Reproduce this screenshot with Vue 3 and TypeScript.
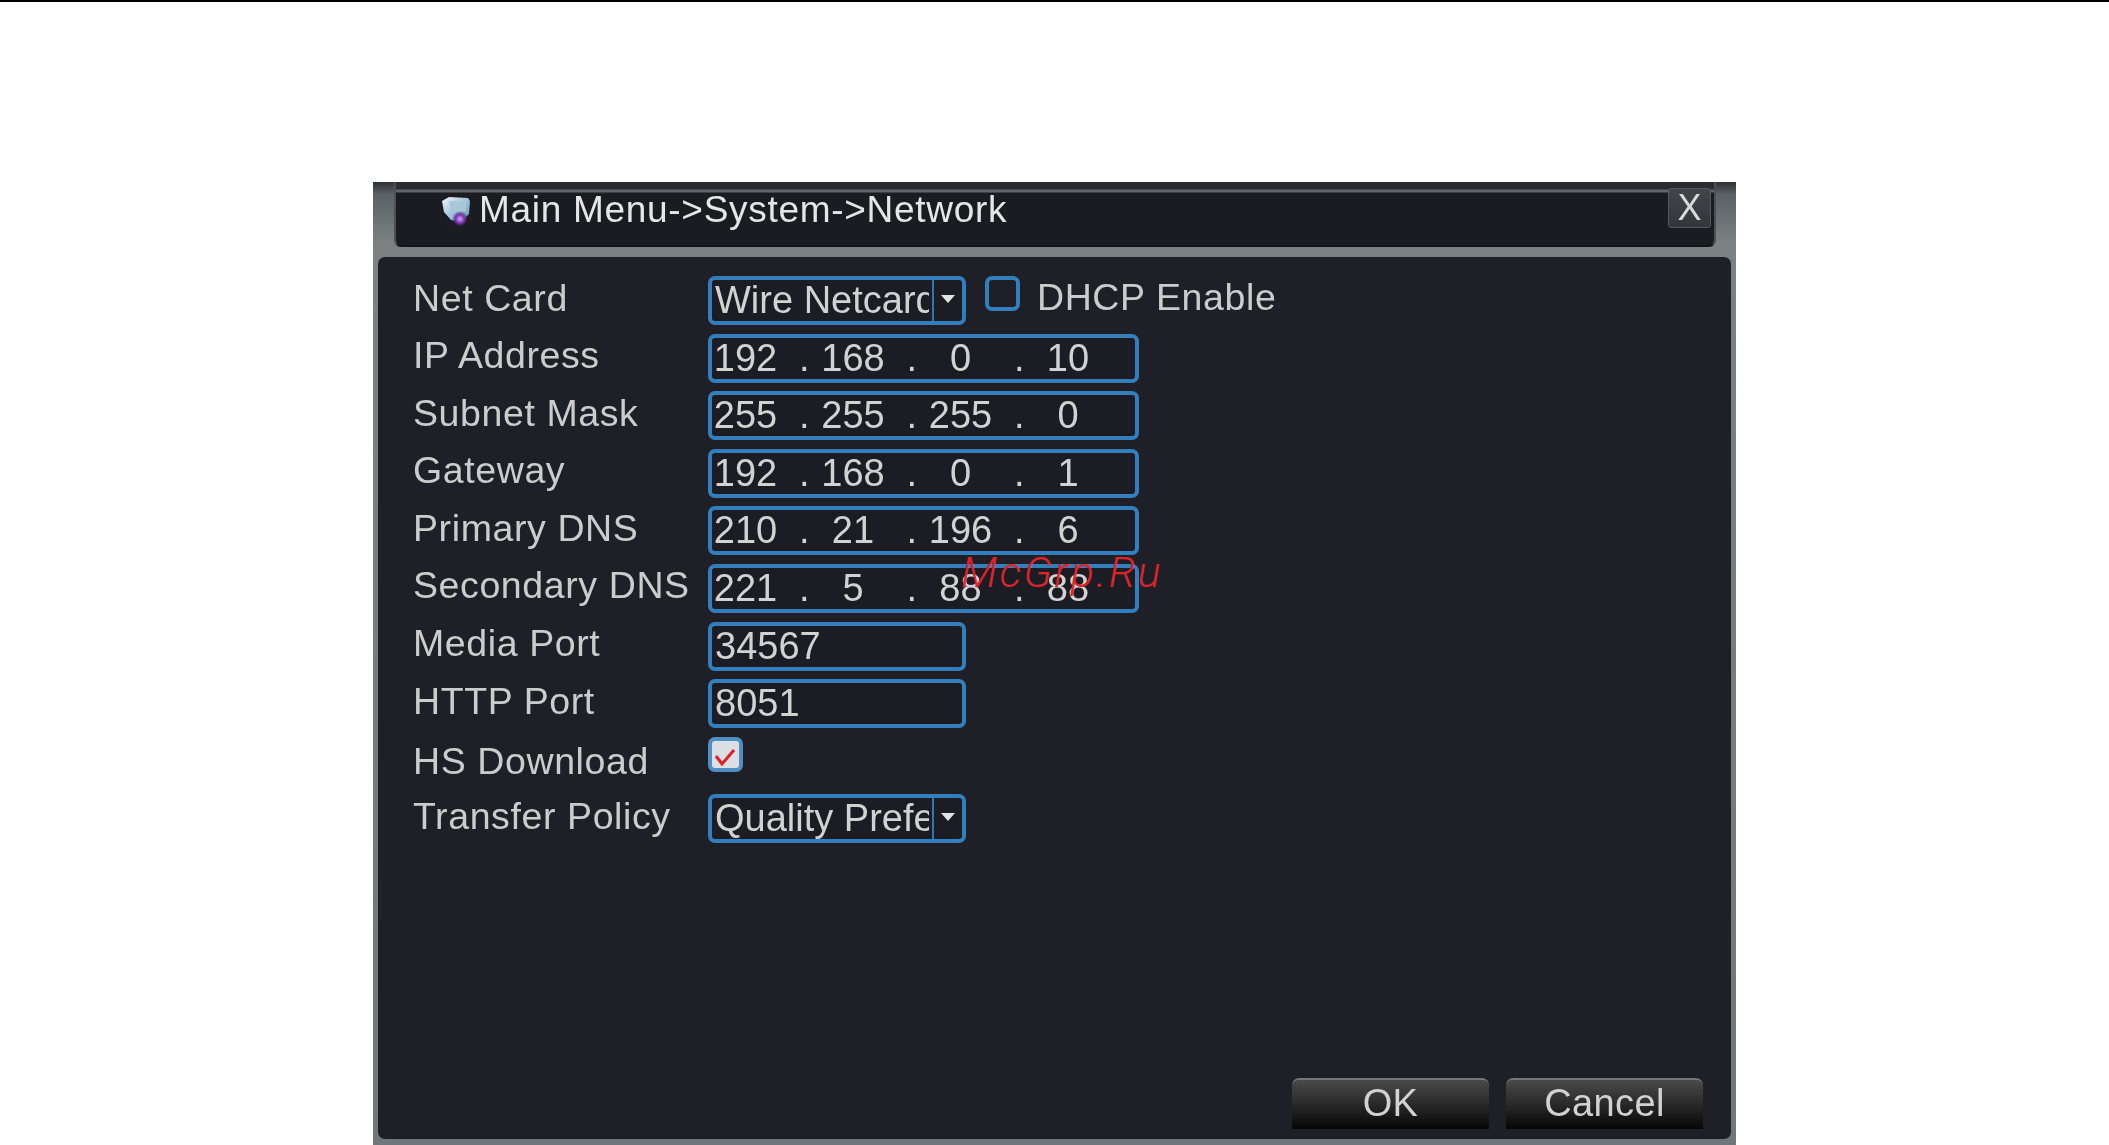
<script setup lang="ts">
const ipRows: { label: string; octets: string[] }[] = [
  { label: 'IP Address', octets: ['192', '168', '0', '10'] },
  { label: 'Subnet Mask', octets: ['255', '255', '255', '0'] },
  { label: 'Gateway', octets: ['192', '168', '0', '1'] },
  { label: 'Primary DNS', octets: ['210', '21', '196', '6'] },
  { label: 'Secondary DNS', octets: ['221', '5', '88', '88'] }
]
const portRows = [
  { label: 'Media Port', value: '34567' },
  { label: 'HTTP Port', value: '8051' }
]
</script>

<template>
  <div class="page">
    <div class="rule"></div>
    <div class="stage">
      <div class="dialog">
        <header class="titlebar">
          <svg class="app-icon" viewBox="0 0 30 32" width="30" height="32">
            <defs>
              <linearGradient id="screen" x1="0" y1="0" x2="1" y2="1">
                <stop offset="0" stop-color="#f2f6fa" />
                <stop offset="0.55" stop-color="#9cc0d8" />
                <stop offset="1" stop-color="#6a93b0" />
              </linearGradient>
              <radialGradient id="glow">
                <stop offset="0" stop-color="#d9a6f4" />
                <stop offset="0.55" stop-color="#7a30b0" />
                <stop offset="1" stop-color="#35205a" stop-opacity="0" />
              </radialGradient>
            </defs>
            <path d="M1 6 L8 2 L27 3 L29 6 L28 19 L20 27 L10 25 L3 17 Z" fill="url(#screen)" />
            <path d="M8 6 L25 7 L25 16 L10 17 Z" fill="#a9c6da" />
            <circle cx="19" cy="24" r="8" fill="url(#glow)" />
          </svg>
          <span class="title-text">Main Menu-&gt;System-&gt;Network</span>
          <button class="close">X</button>
        </header>

        <main class="panel">
          <div class="form">
            <div class="row">
              <span class="label">Net Card</span>
              <div class="field-group">
                <div class="box short select">
                  <span class="select-text">Wire Netcard</span>
                  <span class="caret"></span>
                </div>
                <span class="check"></span>
                <span class="label dhcp">DHCP Enable</span>
              </div>
            </div>

            <div v-for="r in ipRows" :key="r.label" class="row">
              <span class="label">{{ r.label }}</span>
              <div class="box wide">
                <template v-for="(o, i) in r.octets" :key="i">
                  <span class="octet">{{ o }}</span>
                  <span v-if="i < 3" class="dot">.</span>
                </template>
              </div>
            </div>

            <div v-for="r in portRows" :key="r.label" class="row">
              <span class="label">{{ r.label }}</span>
              <div class="box short"><span class="plain">{{ r.value }}</span></div>
            </div>

            <div class="row row-check">
              <span class="label flat">HS Download</span>
              <span class="check checked">
                <svg viewBox="0 0 24 24" width="24" height="24">
                  <path d="M2 14 L8 22 L20 8" fill="none" stroke="#e0202c" stroke-width="3" />
                </svg>
              </span>
            </div>

            <div class="row">
              <span class="label">Transfer Policy</span>
              <div class="box short select">
                <span class="select-text">Quality Prefer</span>
                <span class="caret"></span>
              </div>
            </div>
          </div>

          <footer class="actions">
            <button class="btn">OK</button>
            <button class="btn">Cancel</button>
          </footer>
        </main>
      </div>
      <span class="watermark">McGrp.Ru</span>
    </div>
  </div>
</template>

<style>
html, body { margin: 0; background: #fff; }
</style>

<style scoped>
.page {
  height: 1145px;
  overflow: hidden;
  display: flex;
  flex-direction: column;
  background: #fff;
  font-family: "Liberation Sans", Arial, sans-serif;
  color: #d6d6d6;
}
.rule { height: 2px; background: #000; flex: none; }
.stage {
  position: relative;
  flex: 1;
  min-height: 0;
  padding: 180px 373px 0 373px;
  display: flex;
}
.dialog {
  flex: 1;
  display: flex;
  flex-direction: column;
  padding: 0 5px 6px;
  background: linear-gradient(#2e3136 0, #5a6165 12px, #7b8281 62px, #70777a 100%);
  filter: blur(0.7px);
}
.titlebar {
  flex: none;
  height: 57px;
  margin: 0 15px 0 16px;
  padding: 6px 3px 0 45px;
  display: flex;
  align-items: flex-start;
  background: linear-gradient(#2a2c31 0, #2a2c31 7px, #62666b 8px, #62666b 10px, #1b1c22 11px);
  border-left: 2px solid #4c5054;
  border-right: 2px solid #4c5054;
  border-bottom: 2px solid #14151a;
  border-radius: 0 0 7px 7px;
}
.app-icon { flex: none; margin-top: 7px; }
.title-text {
  margin-left: 8px;
  margin-top: 1px;
  font-size: 37px;
  line-height: 42px;
  letter-spacing: 0.7px;
  white-space: nowrap;
  color: #e6e6e6;
}
.close {
  margin-left: auto;
  width: 43px;
  height: 40px;
  padding: 0;
  border: 1px solid #55585c;
  border-radius: 3px;
  background: linear-gradient(#43454a, #34353a);
  color: #d8d8d8;
  font: 36px/36px "Liberation Sans", Arial, sans-serif;
}
.panel {
  flex: 1;
  min-height: 0;
  margin-top: 10px;
  padding: 19px 28px 10px 35px;
  display: flex;
  flex-direction: column;
  background: #1f2027;
  border-radius: 7px;
}
.form { display: flex; flex-direction: column; gap: 8.6px; }
.row {
  height: 49px;
  display: grid;
  grid-template-columns: 295px 1fr;
  align-items: center;
}
.row-check { align-items: start; }
.label {
  font-size: 37.5px;
  line-height: 42px;
  letter-spacing: 0.6px;
  white-space: nowrap;
  padding-bottom: 6px;
  color: #cccccc;
}
.label.flat { padding: 3px 0 0; }
.label.dhcp { margin-left: 17px; }
.field-group { display: flex; align-items: flex-start; }
.box {
  box-sizing: border-box;
  height: 49px;
  display: flex;
  align-items: center;
  border: 4px solid #337fbd;
  border-radius: 7px;
  font-size: 38px;
  color: #d2d2d2;
  background: #1c1d24;
}
.wide { width: 431px; flex: none; }
.short { width: 258px; flex: none; }
.octet { flex: none; width: 67px; text-align: center; }
.dot { flex: none; width: 40.5px; box-sizing: border-box; text-align: right; padding-right: 10px; }
.plain { padding-left: 3px; }
.select { overflow: hidden; }
.select-text {
  flex: 1;
  min-width: 0;
  margin-right: 3px;
  padding-left: 3px;
  overflow: hidden;
  white-space: nowrap;
}
.caret {
  flex: none;
  width: 30px;
  height: 100%;
  display: flex;
  align-items: center;
  justify-content: center;
  padding-bottom: 4px;
  box-sizing: border-box;
  border-left: 2px solid #2f77b3;
}
.caret::after {
  content: "";
  border-left: 7px solid transparent;
  border-right: 7px solid transparent;
  border-top: 8px solid #e2e2e2;
}
.check {
  box-sizing: border-box;
  flex: none;
  width: 35px;
  height: 35px;
  margin-left: 19px;
  border: 4px solid #337fbd;
  border-radius: 7px;
}
.check.checked {
  margin-left: 0;
  background: #dcdfe4;
  border-color: #4f8fc4;
  display: flex;
  align-items: center;
  justify-content: center;
}
.actions {
  margin-top: auto;
  display: flex;
  justify-content: flex-end;
  gap: 17px;
}
.btn {
  width: 197px;
  height: 51px;
  padding: 0 0 4px;
  border: none;
  border-top: 2px solid #74767a;
  border-radius: 7px 7px 0 0;
  background: linear-gradient(#4a4a4b, #2c2c2c 45%, #060606);
  color: #d2d2d2;
  font: 38px/42px "Liberation Sans", Arial, sans-serif;
  letter-spacing: 0.4px;
}
.watermark {
  position: absolute;
  left: 961px;
  top: 570px;
  transform: translateY(-50%);
  font: italic 300 43px/50px Roboto, "Liberation Sans", sans-serif;
  letter-spacing: 2.4px;
  color: #e0232a;
  white-space: nowrap;
}
</style>
